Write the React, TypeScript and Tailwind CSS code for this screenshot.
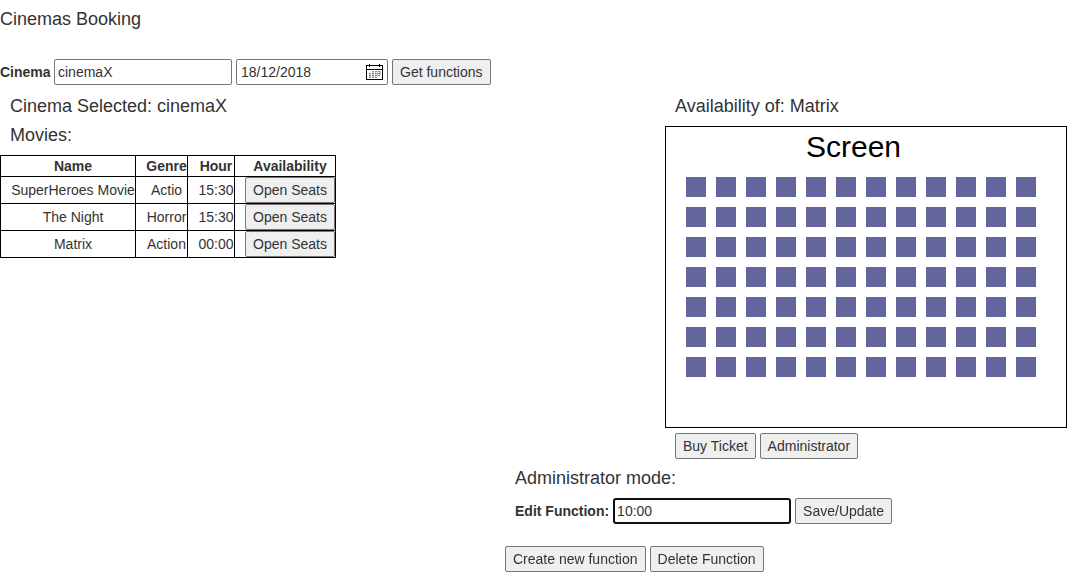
import { useState } from 'react';
import type { ButtonHTMLAttributes } from 'react';

const movies = [
  { name: 'SuperHeroes Movie', genre: 'Actio', hour: '15:30' },
  { name: 'The Night', genre: 'Horror', hour: '15:30' },
  { name: 'Matrix', genre: 'Action', hour: '00:00' },
];

const seats = Array.from({ length: 7 * 12 }, (_, i) => ({
  row: Math.floor(i / 12) + 1,
  column: (i % 12) + 1,
}));

function Button(props: ButtonHTMLAttributes<HTMLButtonElement>) {
  return (
    <button
      type="button"
      className="h-[26px] shrink-0 whitespace-nowrap rounded-[2px] border border-[#767676] bg-[#efefef] px-[7px] hover:bg-[#e5e5e5]"
      {...props}
    />
  );
}

function CalendarIcon() {
  return (
    <svg width="17" height="16" viewBox="0 0 17 16" fill="none" shapeRendering="crispEdges" aria-hidden="true">
      <path d="M0 1h17v15H0z" fill="#000" />
      <path d="M1 2h15v3H1zM1 6h15v9H1z" fill="#fff" />
      <path d="M3 0h1v3H3zM13 0h1v3h-1z" fill="#000" />
      <path d="M6 7h2v6H6zM9 7h1v6H9zM11 7h1v6h-1zM13 7h2v4h-2zM3 9h2v4H3z" fill="#c4c4c4" />
      <path d="M6 7.5h9" stroke="#999" strokeDasharray="2 1" />
      <path d="M3 9.5h12M3 11.5h12M3 13.5h9" stroke="#858585" strokeDasharray="2 1" />
    </svg>
  );
}

function MoviesTable({ onOpen }: { onOpen: (name: string) => void }) {
  const cell = 'border border-black p-0 pl-[10px] text-center';
  return (
    <table className="w-[336px] table-fixed border-collapse">
      <colgroup>
        <col className="w-[135px]" />
        <col className="w-[52px]" />
        <col className="w-[47px]" />
        <col className="w-[101px]" />
      </colgroup>
      <thead>
        <tr className="h-[21px]">
          <th className={cell}>Name</th>
          <th className={cell}>Genre</th>
          <th className={cell}>Hour</th>
          <th className={cell}>Availability</th>
        </tr>
      </thead>
      <tbody>
        {movies.map((movie) => (
          <tr key={movie.name} className="h-[27px]">
            <td className={cell + ' whitespace-nowrap'}>{movie.name}</td>
            <td className={cell}>{movie.genre}</td>
            <td className={cell}>{movie.hour}</td>
            <td className={cell}>
              <div className="flex">
                <Button onClick={() => onOpen(movie.name)}>Open Seats</Button>
              </div>
            </td>
          </tr>
        ))}
      </tbody>
    </table>
  );
}

function SeatMap() {
  return (
    <div className="h-[302px] w-[402px] border border-black">
      <p className="h-[50px] pl-[140px] text-[30px] leading-[40px] text-black">Screen</p>
      <div className="grid grid-cols-[repeat(12,20px)] gap-[10px] pl-5">
        {seats.map(({ row, column }) => (
          <button
            key={`${row}-${column}`}
            type="button"
            aria-label={`Row ${row}, seat ${column}`}
            className="size-5 bg-[#63659c]"
          />
        ))}
      </div>
    </div>
  );
}

export default function App() {
  const [cinema, setCinema] = useState('cinemaX');
  const [date, setDate] = useState('18/12/2018');
  const [movie, setMovie] = useState('Matrix');
  const [hour, setHour] = useState('10:00');

  return (
    <main className="bg-white font-['Liberation_Sans',Arial,sans-serif] text-[14px] leading-5 text-[#333]">
      <h1 className="pt-[9px] text-[18px]">Cinemas Booking</h1>

      <form className="mt-[30px] flex items-center gap-1" onSubmit={(e) => e.preventDefault()}>
        <label htmlFor="cinema" className="w-[50px] font-bold">
          Cinema
        </label>
        <input
          id="cinema"
          value={cinema}
          onChange={(e) => setCinema(e.target.value)}
          className="h-[26px] w-[178px] rounded-[2px] border border-[#767676] px-[3px]"
        />
        <div className="flex h-[26px] w-[152px] items-center rounded-[2px] border border-[#767676] px-1">
          <input
            aria-label="Date"
            value={date}
            onChange={(e) => setDate(e.target.value)}
            className="min-w-0 flex-1 outline-none"
          />
          <button type="button" aria-label="Open calendar">
            <CalendarIcon />
          </button>
        </div>
        <Button type="submit">Get functions</Button>
      </form>

      <div className="flex items-start justify-between pt-[11px] pr-4">
        <section>
          <h2 className="pl-[10px] text-[18px]">Cinema Selected: {cinema}</h2>
          <h2 className="mt-[9px] mb-[10px] pl-[10px] text-[18px]">Movies:</h2>
          <MoviesTable onOpen={setMovie} />
        </section>

        <div className="flex w-[562px] flex-col">
          <section className="self-end">
            <h2 className="mb-[10px] pl-[10px] text-[18px]">Availability of: {movie}</h2>
            <SeatMap />
            <div className="mt-[5px] flex gap-1 pl-[10px]">
              <Button>Buy Ticket</Button>
              <Button>Administrator</Button>
            </div>
          </section>

          <section className="mt-[9px]">
            <h2 className="pl-[10px] text-[18px]">Administrator mode:</h2>
            <form className="mt-[10px] flex items-center gap-1 pl-[10px]" onSubmit={(e) => e.preventDefault()}>
              <label htmlFor="hour" className="font-bold">
                Edit Function:
              </label>
              <input
                id="hour"
                autoFocus
                value={hour}
                onChange={(e) => setHour(e.target.value)}
                className="h-[26px] w-[178px] rounded-[3px] border-2 border-[#101010] px-[2px] outline-none"
              />
              <Button type="submit">Save/Update</Button>
            </form>
            <div className="mt-[22px] flex gap-1">
              <Button>Create new function</Button>
              <Button>Delete Function</Button>
            </div>
          </section>
        </div>
      </div>
    </main>
  );
}
